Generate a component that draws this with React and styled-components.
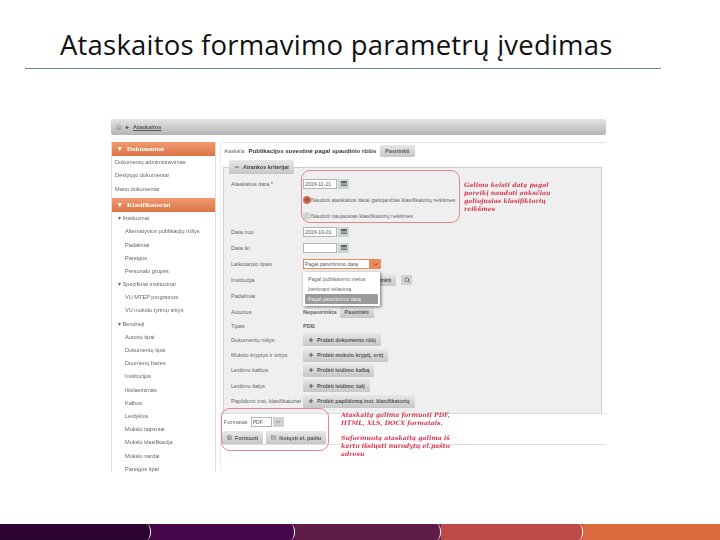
import React from "react";
import styled, { createGlobalStyle } from "styled-components";
import { Home, Plus, Minus, ChevronDown, Save, Mail, Search } from "lucide-react";

const Global = createGlobalStyle`
  html, body { margin: 0; padding: 0; background: #fff; }
  body { font-family: "Liberation Sans", Arial, sans-serif; }
`;

const Slide = styled.div`
  width: 720px;
  height: 540px;
  position: relative;
  overflow: hidden;
  display: flex;
  flex-direction: column;
  background: #fff;
`;

const Title = styled.h1`
  margin: 0 59px 0 25px;
  padding: 26px 0 4px 35px;
  height: 38px;
  border-bottom: 1px solid #6f8698;
  font: 400 27.5px/38px "Open Sans", sans-serif;
  letter-spacing: 0.2px;
  color: #111;
  white-space: nowrap;
`;

const Shot = styled.div`
  position: relative;
  width: 495px;
  height: 353px;
  margin: 50px 0 0 111px;
  display: flex;
  flex-direction: column;
  overflow: hidden;
  font-size: 5.6px;
  color: #666;
  filter: blur(0.4px);
`;

const Breadcrumb = styled.div`
  height: 16px;
  flex: none;
  display: flex;
  align-items: center;
  gap: 4px;
  padding-left: 5px;
  border-radius: 2px;
  background: linear-gradient(#e4e4e4, #b4b4b4);
  font-weight: 700;
  color: #555;
`;

const Crumb = styled.span`
  text-decoration: underline;
`;

const Body = styled.div`
  flex: 1;
  display: flex;
  gap: 4px;
  margin-top: 7px;
`;

const Sidebar = styled.nav`
  width: 103px;
  flex: none;
  border-left: 1px solid #ddd;
  border-right: 1px solid #ddd;
`;

const SideHead = styled.div`
  height: 14px;
  display: flex;
  align-items: center;
  gap: 5px;
  padding-left: 6px;
  background: linear-gradient(#ef9a72, #dd7445);
  color: #fff;
  font: 700 7px "Liberation Serif", serif;
`;

const SideGroup = styled.div`
  margin-bottom: ${(p) => p.$gap || 0}px;
`;

const SideRow = styled.div`
  height: ${(p) => p.$h || 13.2}px;
  line-height: ${(p) => p.$h || 13.2}px;
  white-space: nowrap;
  padding-left: ${(p) => (p.$level === 2 ? 13 : p.$level === 1 ? 6 : 3)}px;
`;

const Main = styled.div`
  flex: 1;
  min-width: 0;
  display: flex;
  flex-direction: column;
  border-top: 1px solid #e6e6e6;
  border-left: 1px solid #eee;
  border-radius: 2px 0 0 0;
`;

const ReportLine = styled.div`
  height: 16px;
  display: flex;
  align-items: center;
  gap: 4px;
  padding-left: 3px;
  font-size: 5px;
  b { font-size: 6px; color: #333; }
`;

const Button = styled.span`
  display: inline-flex;
  align-items: center;
  gap: 3px;
  height: ${(p) => p.$h || 12}px;
  padding: 0 5px;
  border-radius: 1px;
  background: linear-gradient(#e8e8e8, #c6c6c6);
  color: #555;
  font-size: 5.4px;
  font-weight: 700;
  white-space: nowrap;
`;

const Panel = styled.div`
  position: relative;
  margin: 8px 4px 0 2px;
  height: 246px;
  padding: 8px 0 0 7px;
  background: #efefef;
  border: 1px solid #ccc;
  border-bottom: none;
  box-sizing: border-box;
`;

const Tab = styled(Button)`
  position: absolute;
  left: 5px;
  top: -8px;
  height: 14px;
  color: #444;
`;

const Row = styled.div`
  height: ${(p) => p.$h || 16}px;
  display: grid;
  grid-template-columns: 72px 1fr;
  align-items: center;
  white-space: nowrap;
`;

const Field = styled.div`
  display: flex;
  align-items: center;
  gap: ${(p) => p.$gap ?? 1}px;
  padding-left: ${(p) => p.$indent || 0}px;
`;

const Input = styled.span`
  display: block;
  box-sizing: border-box;
  width: ${(p) => p.$w || 34}px;
  height: 10px;
  line-height: 8px;
  padding-left: 1px;
  background: #fff;
  border: 1px solid ${(p) => (p.$focus ? "#e58a5c" : "#b5b5b5")};
  color: #555;
  font-size: 5.2px;
  white-space: nowrap;
`;

const IconBtn = styled.span`
  width: 11px;
  height: 10px;
  display: inline-flex;
  align-items: center;
  justify-content: center;
  background: ${(p) => p.$bg || "#cfd2d2"};
  color: ${(p) => p.$fg || "#5c6a70"};
`;

const Radio = styled.span`
  width: 8px;
  height: 8px;
  flex: none;
  border-radius: 50%;
  background: ${(p) => (p.$on ? "radial-gradient(#a83c2c, #e09a82)" : "#d4d4d4")};
`;

const RadioField = styled(Field)`
  gap: 0;
  font-size: 5.5px;
`;

const Footer = styled.div`
  height: 16px;
  margin-top: auto;
  flex: none;
  display: flex;
`;

const Segment = styled.div`
  position: relative;
  width: ${(p) => p.$w}px;
  background: ${(p) => p.$bg};
  &::after {
    content: "";
    display: ${(p) => (p.$last ? "none" : "block")};
    position: absolute;
    top: 0;
    right: 0;
    width: 4px;
    height: 100%;
    box-sizing: border-box;
    border-right: 1px solid #fff;
    border-radius: 0 100% 100% 0 / 0 50% 50% 0;
  }
`;

const FormatBar = styled.div`
  height: 30px;
  padding-left: 1px;
  border-top: 1px solid #ddd;
  border-bottom: 1px solid #ddd;
  box-sizing: content-box;
`;

const FormatLine = styled.div`
  height: 16px;
  display: flex;
  align-items: center;
  gap: 3px;
  padding-left: 2px;
`;

const ActionLine = styled.div`
  display: flex;
  gap: 3px;
  margin-top: 1px;
`;

const Highlight = styled.div`
  position: absolute;
  box-sizing: border-box;
  left: ${(p) => p.$x}px;
  top: ${(p) => p.$y}px;
  width: ${(p) => p.$w}px;
  height: ${(p) => p.$h}px;
  border: 1px solid #e0888c;
  border-radius: 9px;
`;

const Note = styled.div`
  position: absolute;
  left: ${(p) => p.$x}px;
  top: ${(p) => p.$y}px;
  font: italic 700 6.2px/8px "DejaVu Serif", serif;
  color: #d83a52;
  white-space: pre;
`;

const Menu = styled.div`
  position: absolute;
  left: 79px;
  top: 104px;
  width: 77px;
  height: 34px;
  box-sizing: border-box;
  padding: 2px;
  background: #fff;
  box-shadow: 1px 1px 3px rgba(0, 0, 0, 0.55);
  font-size: 5.2px;
`;

const MenuItem = styled.div`
  height: 10px;
  line-height: 10px;
  padding-left: 3px;
  white-space: nowrap;
  border-radius: 1px;
  background: ${(p) => (p.$active ? "#9a9a9a" : "transparent")};
  color: ${(p) => (p.$active ? "#eee" : "#666")};
`;

const sideTop = ["Dokumentų administravimas", "Dėstytojo dokumentai", "Mano dokumentai"];
const sideTree = [
  ["▾ Institucinai", 1],
  ["Alternatyvios publikacijų rūšys", 2],
  ["Padaliniai", 2],
  ["Pareigos", 2],
  ["Personalo grupės", 2],
  ["▾ Specifiniai institucinai", 1],
  ["VU MTEP programos", 2],
  ["VU mokslo tyrimų sritys", 2],
  ["▾ Bendrieji", 1],
  ["Autorių tipai", 2],
  ["Dokumentų tipai", 2],
  ["Duomenų bazės", 2],
  ["Institucijos", 2],
  ["Išsilavinimas", 2],
  ["Kalbos", 2],
  ["Leidyklos", 2],
  ["Mokslo laipsniai", 2],
  ["Mokslo klasifikacija", 2],
  ["Mokslo vardai", 2],
  ["Pareigos tipai", 2],
];

const addRows = [
  ["Dokumentų rūšys", "Pridėti dokumento rūšį"],
  ["Mokslo kryptys ir sritys", "Pridėti mokslo kryptį, sritį"],
  ["Leidimo kalbos", "Pridėti leidimo kalbą"],
  ["Leidimo šalys", "Pridėti leidimo šalį"],
  ["Papildomi inst. klasifikatoriai", "Pridėti papildomą inst. klasifikatorių"],
];

const CalendarGlyph = () => (
  <svg width="6" height="6" viewBox="0 0 6 6">
    <rect width="6" height="2" fill="currentColor" />
    <path d="M0 3h6M0 4.5h6" stroke="currentColor" strokeWidth="0.9" />
  </svg>
);

const DateField = ({ value }) => (
  <Field>
    <Input>{value}</Input>
    <IconBtn><CalendarGlyph /></IconBtn>
  </Field>
);

export default function App() {
  return (
    <Slide>
      <Global />
      <Title>Ataskaitos formavimo parametrų įvedimas</Title>
      <Shot>
        <Breadcrumb>
          <Home size={6} color="#888" />
          <span>▸</span>
          <Crumb>Ataskaitos</Crumb>
        </Breadcrumb>
        <Body>
          <Sidebar>
            <SideHead><span>▾</span> Dokumentai</SideHead>
            <SideGroup $gap={2}>
              {sideTop.map((t) => <SideRow key={t} $h={13.4}>{t}</SideRow>)}
            </SideGroup>
            <SideHead><span>▾</span> Klasifikatoriai</SideHead>
            <SideGroup>
              {sideTree.map(([t, l]) => <SideRow key={t} $level={l}>{t}</SideRow>)}
            </SideGroup>
          </Sidebar>
          <Main>
            <ReportLine>
              Ataskaita <b>Publikacijos suvestinė pagal spaudinio rūšis</b>
              <Button>Pasirinkti</Button>
            </ReportLine>
            <Panel>
              <Tab><Minus size={6} strokeWidth={3} /> Atrankos kriterijai</Tab>
              <Row><span>Ataskaitos data *</span><DateField value="2016-11-21" /></Row>
              <Row><span /><RadioField><Radio $on />Naudoti ataskaitos datai galiojančias klasifikatorių reikšmes</RadioField></Row>
              <Row><span /><RadioField><Radio />Naudoti naujausias klasifikatorių reikšmes</RadioField></Row>
              <Row><span>Data nuo</span><DateField value="2016-10-01" /></Row>
              <Row><span>Data iki</span><DateField value="" /></Row>
              <Row>
                <span>Laikotarpio tipas</span>
                <Field $gap={0}>
                  <Input $w={67} $focus>Pagal patvirtinimo datą</Input>
                  <IconBtn $bg="#e88a5c" $fg="#8a3c18"><ChevronDown size={7} strokeWidth={3} /></IconBtn>
                </Field>
              </Row>
              <Row>
                <span>Institucija</span>
                <Field $gap={5} $indent={59}>
                  <Button>Pasirinkti</Button>
                  <IconBtn><Search size={6} strokeWidth={3} /></IconBtn>
                </Field>
              </Row>
              <Row><span>Padaliniai</span><span /></Row>
              <Row $h={15}>
                <span>Autorius</span>
                <Field $gap={3}><b>Nepasirinkta</b><Button>Pasirinkti</Button></Field>
              </Row>
              <Row $h={13}><span>Tipas</span><b>PDB</b></Row>
              {addRows.map(([label, action]) => (
                <Row key={label} $h={15.4}>
                  <span>{label}</span>
                  <Field>
                    <Button $h={13}><Plus size={6} strokeWidth={4} color="#3f5a66" /> {action}</Button>
                  </Field>
                </Row>
              ))}
              <Menu>
                <MenuItem>Pagal publikavimo metus</MenuItem>
                <MenuItem>Įvertinant vėlavimą</MenuItem>
                <MenuItem $active>Pagal patvirtinimo datą</MenuItem>
              </Menu>
            </Panel>
            <FormatBar>
              <FormatLine>
                <span>Formatas</span>
                <Field>
                  <Input $w={21}>PDF</Input>
                  <IconBtn><ChevronDown size={6} strokeWidth={3} /></IconBtn>
                </Field>
              </FormatLine>
              <ActionLine>
                <Button $h={13}><Save size={5} /> Formuoti</Button>
                <Button $h={13}><Mail size={5} /> Išsiųsti el. paštu</Button>
              </ActionLine>
            </FormatBar>
          </Main>
        </Body>
        <Highlight $x={190} $y={51} $w={159} $h={53} />
        <Highlight $x={110} $y={289} $w={108} $h={43} />
        <Note $x={353} $y={62}>{"Galima keisti datą pagal\nporeikį naudoti anksčiau\ngaliojusias klasifiktorių\nreikšmes"}</Note>
        <Note $x={230} $y={292}>{"Ataskaitą galima formuoti PDF,\nHTML, XLS, DOCX formatais."}</Note>
        <Note $x={230} $y={315}>{"Suformuotą ataskaitą galima iš\nkarto išsiųsti nurodytų el.pašto\nadresu"}</Note>
      </Shot>
      <Footer>
        <Segment $w={151} $bg="#2e0530" />
        <Segment $w={144} $bg="#47054a" />
        <Segment $w={146} $bg="#5f1c47" />
        <Segment $w={142} $bg="#bf4a4a" />
        <Segment $w={137} $bg="#de6b3f" $last />
      </Footer>
    </Slide>
  );
}
